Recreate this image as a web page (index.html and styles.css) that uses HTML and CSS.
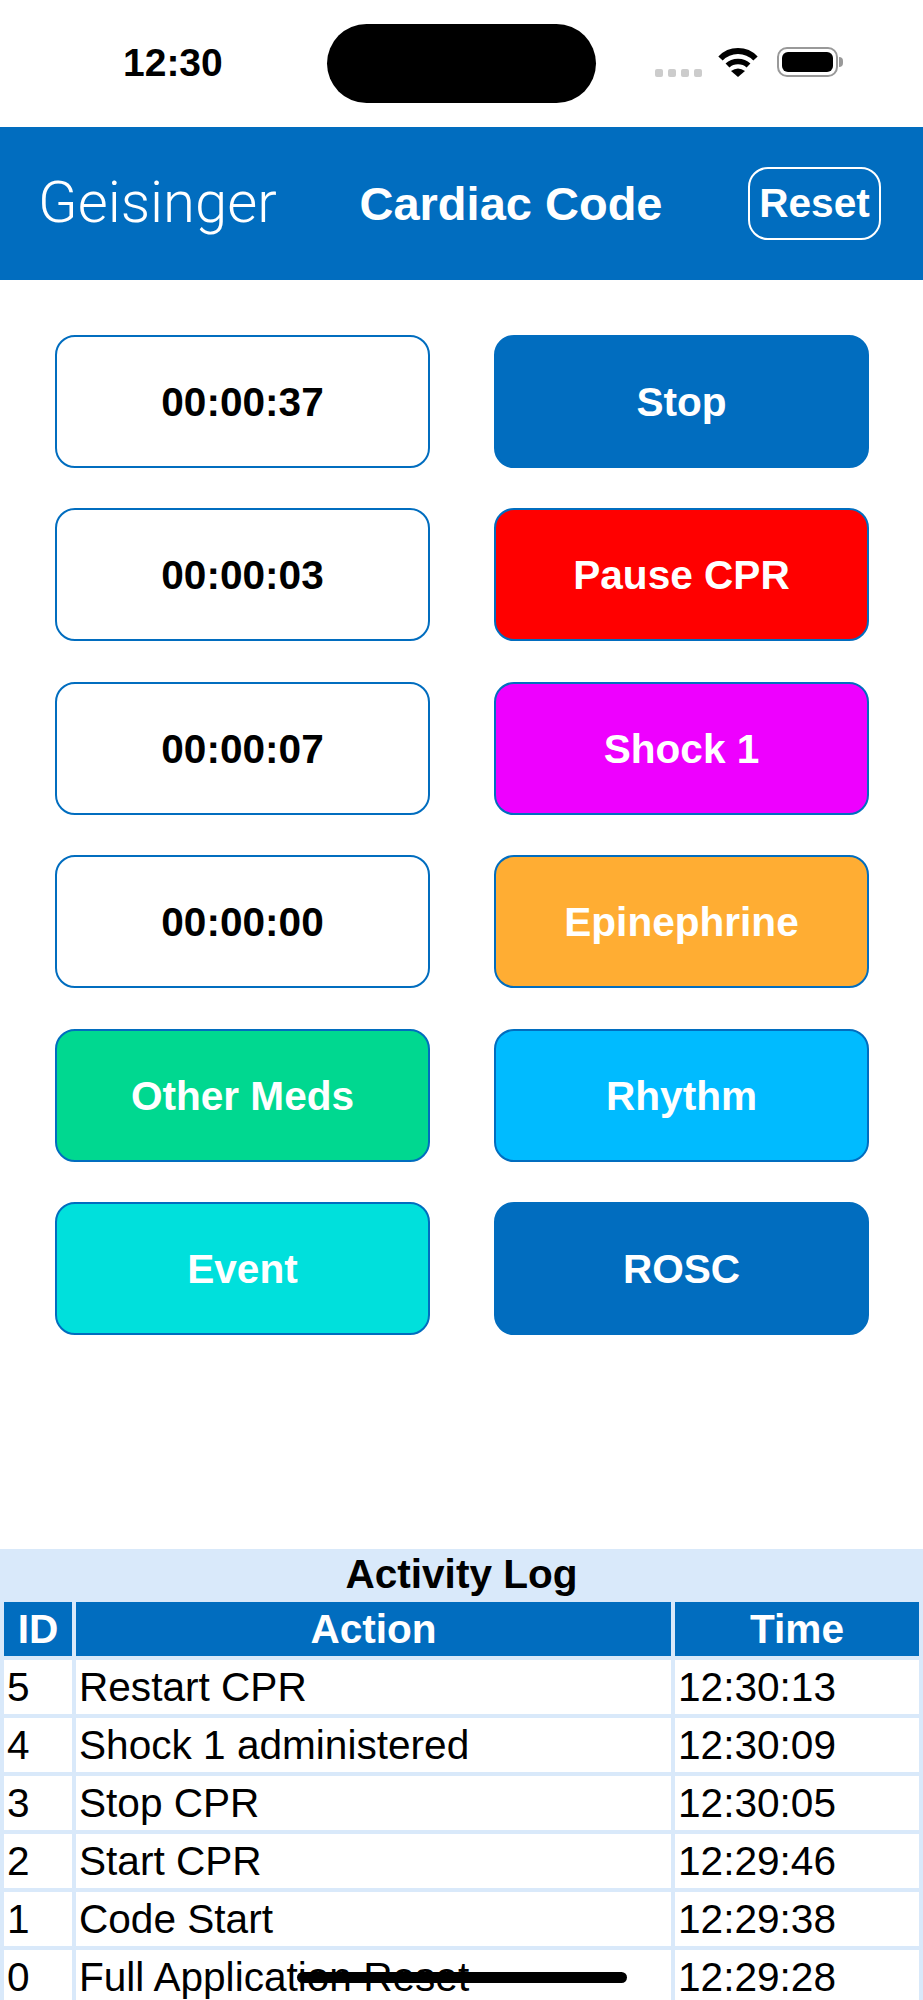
FILE: index.html
```html
<!DOCTYPE html>
<html lang="en">
	<head>
	<meta charset="UTF-8" />
	<meta name="viewport" content="width=device-width, initial-scale=1.0" />
	<title>Cardiac Code</title>

	<link rel="stylesheet" href="styles.css">
	</head>
	<body>
		<div id="statusBar">
			<div id="clock">12:30</div>
			<div id="island"></div>
			<div id="statusIcons">
				<div id="signal"><span></span><span></span><span></span><span></span></div>
				<svg id="wifi" width="40" height="30" viewBox="0 0 40 30">
					<path d="M2.5 11.5C12 1.5 28 1.5 37.5 11.5" fill="none" stroke="#000" stroke-width="6" />
					<path d="M9.5 18.5C15 13 25 13 30.5 18.5" fill="none" stroke="#000" stroke-width="5.5" />
					<path d="M13 24Q20 19 27 24L20 30Z" fill="#000" />
				</svg>
				<div id="battery"><div id="batteryLevel"></div></div>
				<div id="batteryNub"></div>
			</div>
		</div>

		<div id="header">
			<div id="logo">Geisinger</div>
			<div id="title">Cardiac Code</div>
			<button id="reset">Reset</button>
		</div>

		<div id="board">
			<div class="timer">00:00:37</div>
			<button class="action dark">Stop</button>
			<div class="timer">00:00:03</div>
			<button class="action red">Pause CPR</button>
			<div class="timer">00:00:07</div>
			<button class="action magenta">Shock 1</button>
			<div class="timer">00:00:00</div>
			<button class="action orange">Epinephrine</button>
			<button class="action green">Other Meds</button>
			<button class="action sky">Rhythm</button>
			<button class="action cyan">Event</button>
			<button class="action dark">ROSC</button>
		</div>

		<div id="log">
			<div id="logTitle">Activity Log</div>
			<table id="logTable">
				<thead>
					<tr><th class="colId">ID</th><th class="colAction">Action</th><th class="colTime">Time</th></tr>
				</thead>
				<tbody>
					<tr><td>5</td><td>Restart CPR</td><td>12:30:13</td></tr>
					<tr><td>4</td><td>Shock 1 administered</td><td>12:30:09</td></tr>
					<tr><td>3</td><td>Stop CPR</td><td>12:30:05</td></tr>
					<tr><td>2</td><td>Start CPR</td><td>12:29:46</td></tr>
					<tr><td>1</td><td>Code Start</td><td>12:29:38</td></tr>
					<tr><td>0</td><td>Full Application Reset</td><td>12:29:28</td></tr>
				</tbody>
			</table>
		</div>

		<div id="homeBar"></div>
	</body>
</html>
```

FILE: styles.css
```css
* {
	padding: 0;
	margin: 0;
	box-sizing: border-box;
	font-family: 'Liberation Sans', Arial, sans-serif;
}

html,
body {
	height: 2000px;
	overflow: hidden;
}

body {
	position: relative;
	background: #fff;
	color: #000;
}

#statusBar {
	height: 127px;
	display: grid;
	grid-template-columns: 327px 269px 1fr;
	align-items: start;
}

#clock {
	margin-top: 41px;
	padding-left: 123px;
	font-size: 39px;
	line-height: 44px;
	font-weight: bold;
}

#island {
	margin-top: 24px;
	height: 79px;
	border-radius: 40px;
	background: #000;
}

#statusIcons {
	margin-top: 47px;
	padding-left: 59px;
	display: flex;
	align-items: flex-start;
}

#signal {
	margin-top: 22px;
	margin-right: 16px;
	display: flex;
	gap: 5px;
}

#signal span {
	width: 8px;
	height: 8px;
	border-radius: 2px;
	background: #ccc;
}

#wifi {
	margin-right: 19px;
}

#battery {
	width: 61px;
	height: 30px;
	padding: 3px;
	border: 2px solid #999;
	border-radius: 10px;
}

#batteryLevel {
	width: 100%;
	height: 100%;
	border-radius: 6px;
	background: #000;
}

#batteryNub {
	margin-top: 10px;
	margin-left: 1px;
	width: 4px;
	height: 10px;
	border-radius: 0 5px 5px 0;
	background: #999;
}

#header {
	height: 153px;
	padding: 0 42px 0 38px;
	display: flex;
	align-items: center;
	justify-content: space-between;
	background: #016dbf;
	color: #fff;
}

#logo {
	width: 236px;
	font-family: 'Roboto', sans-serif;
	font-weight: 300;
	font-size: 58px;
	line-height: 70px;
	margin-top: -4px;
	white-space: nowrap;
}

#title {
	font-size: 47px;
	font-weight: bold;
}

#reset {
	width: 133px;
	height: 73px;
	border: 2px solid #fff;
	border-radius: 20px;
	background: transparent;
	color: #fff;
	font-size: 40.6px;
	font-weight: bold;
}

#board {
	padding: 55px 55px 0;
	display: grid;
	grid-template-columns: 375px 375px;
	column-gap: 64px;
	grid-auto-rows: 133px;
	row-gap: 40.4px;
}

.timer,
.action {
	padding-top: 2px;
	border: 2px solid #016dbf;
	border-radius: 20px;
	display: flex;
	align-items: center;
	justify-content: center;
	font-size: 40.6px;
	font-weight: bold;
}

.timer {
	background: #fff;
	color: #000;
}

.action {
	color: #fff;
}

.dark { background: #016dbf; }
.red { background: #ff0000; }
.magenta { background: #ee00ff; }
.orange { background: #ffad33; }
.green { background: #00d890; }
.sky { background: #00bbff; }
.cyan { background: #00e0dc; }

#log {
	position: absolute;
	top: 1549px;
	left: 0;
	right: 0;
	background: #d9e9fa;
}

#logTitle {
	height: 53px;
	line-height: 50px;
	text-align: center;
	font-size: 40.6px;
	font-weight: bold;
}

#logTable {
	width: 100%;
	table-layout: fixed;
	border-collapse: separate;
	border-spacing: 4px;
	margin-top: -4px;
	font-size: 40.6px;
}

#logTable th {
	height: 54px;
	background: #016dbf;
	color: #fff;
	font-weight: bold;
	text-align: center;
}

#logTable td {
	height: 54px;
	padding: 0 3px;
	background: #fff;
	white-space: nowrap;
}

.colId { width: 68px; }
.colAction { width: 595px; }

#homeBar {
	position: absolute;
	left: 297px;
	top: 1972px;
	width: 330px;
	height: 11px;
	border-radius: 6px;
	background: #000;
}
```
